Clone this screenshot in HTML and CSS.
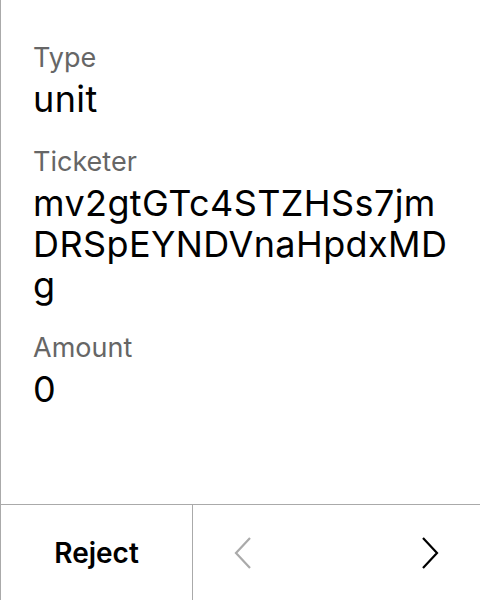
FILE: index.html
```html
<!DOCTYPE html>
<html>
<head>
<meta charset="utf-8">
<link rel="stylesheet" href="styles.css">
</head>
<body>
<div class="screen">
  <div class="content">
    <div class="field">
      <div class="label">Type</div>
      <div class="value">unit</div>
    </div>
    <div class="field">
      <div class="label">Ticketer</div>
      <div class="value">mv2gtGTc4STZHSs7jmDRSpEYNDVnaHpdxMDg</div>
    </div>
    <div class="field">
      <div class="label">Amount</div>
      <div class="value">0</div>
    </div>
  </div>
  <div class="footer">
    <div class="reject">Reject</div>
    <div class="nav">
      <svg class="chev chev-prev" width="18" height="32" viewBox="0 0 18 32"><path d="M16 1 L2 16 L16 31" fill="none" stroke="currentColor" stroke-width="2.2"/></svg>
      <svg class="chev chev-next" width="18" height="32" viewBox="0 0 18 32"><path d="M2 1 L16 16 L2 31" fill="none" stroke="currentColor" stroke-width="2.2"/></svg>
    </div>
  </div>
</div>
</body>
</html>
```
FILE: styles.css
```css
html, body {
  margin: 0;
  padding: 0;
  background: #fff;
}
body {
  font-family: Inter, "Noto Sans", sans-serif;
  color: #000;
}
.screen {
  width: 480px;
  height: 600px;
  box-sizing: border-box;
  border-left: 1px solid #aaaaaa;
  display: flex;
  flex-direction: column;
}
.content {
  flex: 1;
  padding: 40px 32px 0 32px;
  display: flex;
  flex-direction: column;
  gap: 24px;
}
.field {
  display: flex;
  flex-direction: column;
  gap: 4px;
}
.label {
  font-size: 27px;
  line-height: 35px;
  color: #666666;
}
.value {
  font-size: 36px;
  line-height: 41px;
  letter-spacing: 0.4px;
  word-break: break-all;
}
.footer {
  box-sizing: border-box;
  height: 96px;
  border-top: 1px solid #aaaaaa;
  display: grid;
  grid-template-columns: 192px 1fr;
}
.reject {
  display: flex;
  align-items: center;
  justify-content: center;
  font-size: 28px;
  font-weight: 600;
  border-right: 1px solid #aaaaaa;
}
.nav {
  display: flex;
  align-items: center;
  justify-content: space-between;
  padding: 0 41px;
}
.chev-prev { color: #aaaaaa; }
.chev-next { color: #000; }
```
